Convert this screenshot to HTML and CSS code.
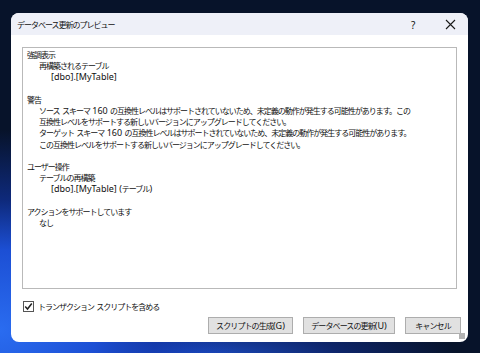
FILE: index.html
```html
<!DOCTYPE html>
<html lang="ja">
<head>
<meta charset="utf-8">
<link rel="stylesheet" href="styles.css">
</head>
<body>
<div class="desktop">
  <div class="dialog">
    <div class="titlebar">
      <span class="title">データベース更新のプレビュー</span>
      <span class="help">?</span>
      <span class="close"><svg width="11" height="11" viewBox="0 0 11 11"><path d="M1 1L10 10M10 1L1 10" stroke="#1a1a1a" stroke-width="1.1" fill="none"/></svg></span>
    </div>
    <div class="body">
      <div class="listbox">
        <div class="l0">強調表示</div>
        <div class="l1">再構築されるテーブル</div>
        <div class="l2"><span class="lat">[dbo].[MyTable]</span></div>
        <div class="blank"></div>
        <div class="l0">警告</div>
        <div class="l1">ソース<span class="lat"> </span>スキーマ<span class="lat"> 160 </span>の互換性レベルはサポートされていないため、未定義の動作が発生する可能性があります。この</div>
        <div class="l1">互換性レベルをサポートする新しいバージョンにアップグレードしてください。</div>
        <div class="l1">ターゲット<span class="lat"> </span>スキーマ<span class="lat"> 160 </span>の互換性レベルはサポートされていないため、未定義の動作が発生する可能性があります。</div>
        <div class="l1">この互換性レベルをサポートする新しいバージョンにアップグレードしてください。</div>
        <div class="blank"></div>
        <div class="l0">ユーザー操作</div>
        <div class="l1">テーブルの再構築</div>
        <div class="l2"><span class="lat">[dbo].[MyTable] (</span>テーブル<span class="lat">)</span></div>
        <div class="blank"></div>
        <div class="l0">アクションをサポートしています</div>
        <div class="l1">なし</div>
      </div>
      <label class="check">
        <span class="box"><svg width="9" height="9" viewBox="0 0 9 9"><path d="M1.2 4.6L3.5 7L7.8 1.5" stroke="#222" stroke-width="1.5" fill="none"/></svg></span>
        <span>トランザクション<span class="lat"> </span>スクリプトを含める</span>
      </label>
      <div class="buttons">
        <button class="btn b1">スクリプトの生成<span class="lat">(G)</span></button>
        <button class="btn b2">データベースの更新<span class="lat">(U)</span></button>
        <button class="btn b3">キャンセル</button>
      </div>
      <div class="grip"></div>
    </div>
  </div>
</div>
</body>
</html>
```
FILE: styles.css
```css
* { box-sizing: border-box; }
html, body { margin: 0; padding: 0; }
body {
  width: 480px;
  height: 353px;
  overflow: hidden;
  font-family: "Noto Sans CJK JP", "Noto Sans", sans-serif;
  color: #111;
  font-size: 8px;
  letter-spacing: -1px;
}
.lat {
  font-family: "Noto Sans", "Open Sans", sans-serif;
  font-size: 9px;
  letter-spacing: 0;
}
.desktop {
  width: 480px;
  height: 353px;
  padding: 13px 0 0 11px;
  background:
    radial-gradient(ellipse 240px 200px at 0px 330px, #2a6cf0 0%, #1c4fd4 40%, rgba(20,60,190,0.55) 65%, rgba(10,25,60,0) 100%),
    radial-gradient(ellipse 260px 60px at 200px 360px, #1d4fc9 0%, rgba(20,55,170,0.5) 55%, rgba(8,20,45,0) 100%),
    #07132a;
}
.dialog {
  width: 457px;
  height: 329px;
  background: #fff;
  border-radius: 8px;
  overflow: hidden;
  display: flex;
  flex-direction: column;
  position: relative;
}
.titlebar {
  height: 22px;
  background: #eef0f8;
  display: flex;
  align-items: center;
  padding: 1px 0 0 6px;
}
.title { flex: 1; }
.help { font-family: "Noto Sans", sans-serif; font-size: 10px; width: 12px; margin-right: 22px; letter-spacing: 0; }
.close { width: 11px; height: 11px; margin-right: 12px; display: flex; }
.body {
  flex: 1;
  display: flex;
  flex-direction: column;
  padding: 12px 11px 0 11px;
}
.listbox {
  height: 242px;
  border: 1px solid #b9b9b9;
  padding: 1px 0 0 4px;
  line-height: 11.2px;
  white-space: nowrap;
  overflow: hidden;
}
.listbox > div { height: 11.2px; }
.l1 { padding-left: 12px; }
.l2 { padding-left: 24px; }
.check {
  display: flex;
  align-items: center;
  gap: 4px;
  margin-top: 12px;
  margin-left: 1px;
  height: 11px;
}
.box {
  width: 11px;
  height: 11px;
  border: 1px solid #555;
  background: #fff;
  display: flex;
  align-items: center;
  justify-content: center;
}
.buttons {
  display: flex;
  justify-content: flex-end;
  gap: 10px;
  margin-top: 5px;
  margin-right: -4px;
}
.btn {
  height: 17px;
  background: #e1e1e1;
  border: 1px solid #adadad;
  font-family: inherit;
  font-size: 8px;
  letter-spacing: -0.9px;
  white-space: nowrap;
  color: #111;
  padding: 0;
  line-height: 15px;
}
.b1 { width: 85px; }
.b2 { width: 92px; }
.b3 { width: 56px; }
.grip {
  position: absolute;
  right: 3px;
  bottom: 3px;
  width: 6px;
  height: 6px;
  background-image: radial-gradient(circle, #b0b0b0 0.7px, transparent 0.9px);
  background-size: 2px 2px;
}
```
